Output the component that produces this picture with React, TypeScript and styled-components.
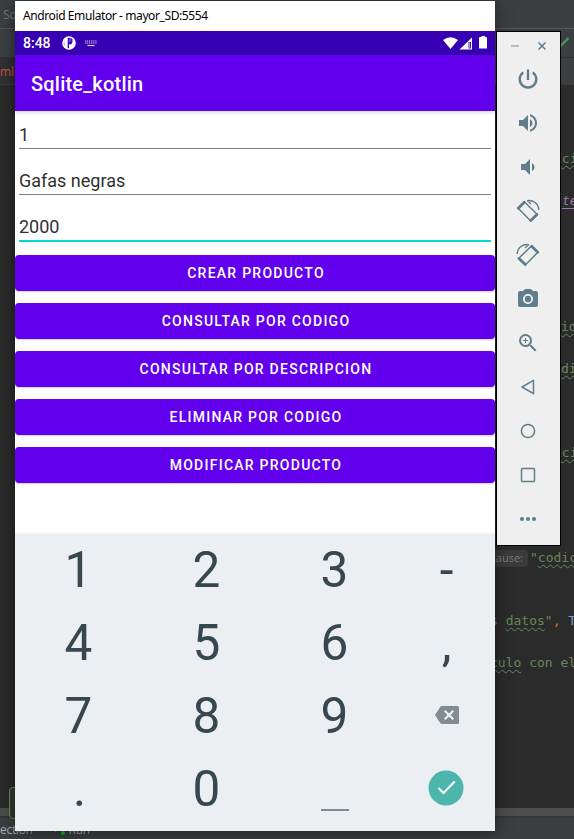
import React from "react";
import styled, { createGlobalStyle, css } from "styled-components";
import { MdVolumeUp, MdVolumeDown, MdPhotoCamera, MdZoomIn } from "react-icons/md";

const GlobalStyle = createGlobalStyle`
  * { box-sizing: border-box; }
  body { margin: 0; overflow: hidden; background: #2b2b2b; }
`;

const Desktop = styled.main`
  position: relative;
  width: 574px;
  height: 839px;
  overflow: hidden;
  font-family: Roboto, sans-serif;
`;

/* ---------- IDE behind the emulator ---------- */

const Ide = styled.div`
  display: flex;
  flex-direction: column;
  height: 100%;
  background: #2b2b2b;
`;

const IdeBar = styled.div`
  display: flex;
  align-items: center;
  flex: none;
  height: 29px;
  padding: 0 3px;
  background: #3c3f41;
  border-bottom: 1px solid #555759;
  font: 12px "Open Sans", sans-serif;
  color: #77797b;
`;

const IdeTools = styled.div`
  display: flex;
  justify-content: flex-end;
  flex: none;
  height: 28px;
  padding: 7px 3px 0 0;
  background: #3c3f41;
`;

const IdeTabs = styled.div`
  flex: none;
  height: 28px;
  background: #3c3f41;
  border-top: 1px solid #323232;
`;

const IdeTab = styled.div`
  width: 60px;
  height: 27px;
  background: #2f3031;
  border-bottom: 1px solid #3a3a3a;
  font: 12px/28px "Open Sans", sans-serif;
  color: #c75450;
`;

const Editor = styled.div`
  flex: 1;
  min-height: 0;
  overflow: hidden;
`;

const CodeLine = styled.div<{ $indent: number }>`
  height: 21px;
  padding-left: ${(p) => p.$indent}px;
  font: 13px/21px "DejaVu Sans Mono", monospace;
  color: #6a8759;
  white-space: pre;
`;

const Typo = styled.span`
  text-decoration: underline wavy #5c8f62 1px;
  text-underline-offset: 2px;
  text-decoration-skip-ink: none;
`;

const Member = styled.span`
  font-style: italic;
  color: #9876aa;
  text-decoration: underline;
  text-underline-offset: 3px;
`;

const Comma = styled.span`
  color: #cc7832;
`;

const TypeName = styled.span`
  color: #6f9bd1;
`;

const Hint = styled.span`
  display: inline-block;
  width: 44px;
  height: 17px;
  margin-right: 2px;
  padding-right: 5px;
  border-radius: 4px;
  background: #3a3a3a;
  font: 11px/16px "Open Sans", sans-serif;
  text-align: right;
  color: #7c7c7c;
`;

const SplitBar = styled.div`
  flex: none;
  height: 10px;
  background: #4d4d4d;
  border-bottom: 2px solid #333435;
`;

const ToolStrip = styled.div`
  display: flex;
  flex: none;
  gap: 21px;
  height: 21px;
  padding-top: 5px;
  background: #3c3f41;
  font: 12px/14px "Open Sans", sans-serif;
  letter-spacing: -0.3px;
  color: #a9acae;
`;

const RunItem = styled.span`
  display: flex;
  gap: 4px;
`;

const Balloon = styled.div`
  position: absolute;
  left: 9px;
  top: 787px;
  width: 40px;
  height: 32px;
  border: 1px solid #6b8a63;
  border-radius: 4px;
  background: #313d2d;
`;

/* ---------- emulator window ---------- */

const Phone = styled.section`
  position: absolute;
  left: 15px;
  top: 1px;
  display: flex;
  flex-direction: column;
  width: 480px;
  height: 830px;
  background: #fff;
  box-shadow: 0 2px 14px rgba(0, 0, 0, 0.5);
`;

const TitleBar = styled.div`
  flex: none;
  height: 30px;
  padding-left: 8px;
  font: 12px/29px "Noto Sans", sans-serif;
  letter-spacing: -0.4px;
  color: #000;
`;

const StatusBar = styled.div`
  display: flex;
  align-items: center;
  flex: none;
  height: 24px;
  padding: 0 6px 0 8px;
  background: #3700b3;
  color: #fff;
  font-size: 14px;
  font-weight: 500;
  svg { display: block; }
`;

const Clock = styled.span`
  width: 39px;
  line-height: 24px;
`;

const Spacer = styled.span`
  flex: 1;
`;

const AppBar = styled.header`
  position: relative;
  flex: none;
  height: 56px;
  padding-left: 16px;
  background: #6200ee;
  box-shadow: 0 1px 4px rgba(0, 0, 0, 0.2);
  font-size: 20px;
  font-weight: 500;
  line-height: 58px;
  letter-spacing: 0.2px;
  color: #fff;
`;

const Form = styled.div`
  flex: 1;
  min-height: 0;
`;

const Field = styled.div<{ $focused?: boolean }>`
  height: ${(p) => (p.$focused ? 47 : 46)}px;
  margin: 0 4px;
  padding-top: 20px;
  font-size: 18px;
  line-height: 24px;
  color: #303030;
  ${(p) =>
    p.$focused
      ? css`border-bottom: 2px solid #03dac5;`
      : css`border-bottom: 1px solid #808080;`}
  &:first-child {
    height: 38px;
    padding-top: 12px;
  }
`;

const Actions = styled.div`
  display: flex;
  flex-direction: column;
  gap: 12px;
  margin-top: 13px;
`;

const ActionButton = styled.button`
  height: 36px;
  padding: 0 0 0 2px;
  border: 0;
  border-radius: 4px;
  background: #6200ee;
  box-shadow: 0 1px 2px rgba(0, 0, 0, 0.2);
  font: 500 14px/36px Roboto, sans-serif;
  letter-spacing: 1.25px;
  color: #fff;
`;

const Keyboard = styled.div`
  display: grid;
  grid-template-columns: 127px 129px 127px 97px;
  grid-template-rows: repeat(4, 73px);
  flex: none;
  height: 297px;
  background: #ebeff2;
  box-shadow: 0 -1px 2px rgba(0, 0, 0, 0.06);
`;

const Key = styled.div`
  display: flex;
  align-items: center;
  justify-content: center;
  height: 70px;
  font-size: 49.5px;
  line-height: 70px;
  padding-top: 1px;
  color: #37474f;
  &:nth-child(12) { padding-top: 0; }
  &:nth-child(13) { padding-left: 2px; }
  &:nth-child(16) { padding: 0 1px 0 0; }
`;

/* ---------- emulator side toolbar ---------- */

const SidePanel = styled.aside`
  position: absolute;
  left: 496px;
  top: 31px;
  width: 65px;
  height: 515px;
  padding-right: 1px;
  border: 1px solid #000;
  background: #efefef;
  color: #607d8b;
  svg { display: block; }
`;

const PanelHeader = styled.div`
  display: flex;
  align-items: center;
  justify-content: space-between;
  height: 25px;
  padding: 2px 12px 0 14px;
`;

const Tool = styled.div`
  display: flex;
  align-items: center;
  justify-content: center;
  height: 44px;
`;

const RotateIcon = ({ flip }: { flip?: boolean }) => (
  <svg width="24" height="24" viewBox="0 0 24 24" fill="none" stroke="currentColor">
    <g transform={flip ? "translate(24 0) scale(-1 1)" : undefined}>
      <path d="M8.500 3 2.200 9.300 14.500 21.800 21.200 15.200Z" strokeWidth="1.500" strokeLinejoin="round" />
      <path d="M8.300 3.200 2.300 9.200M21 15.400 14.700 21.600" strokeWidth="2.800" strokeLinecap="round" />
      <path d="M11 1.600C17 .6 22.600 4.500 22.800 11" strokeWidth="1.400" />
      <path d="M11.500 1.800 15 5" strokeWidth="1.100" />
    </g>
  </svg>
);

const tools: React.ReactNode[] = [
  <svg key="power" width="24" height="24" viewBox="0 0 24 24" fill="none" stroke="currentColor" strokeWidth="2.400">
    <path d="M12 2.500V13M7.300 5.400A8.300 8.300 0 1 0 16.700 5.400" />
  </svg>,
  <MdVolumeUp key="up" size={24} />,
  <MdVolumeDown key="down" size={24} />,
  <RotateIcon key="left" />,
  <RotateIcon key="right" flip />,
  <MdPhotoCamera key="camera" size={24} />,
  <MdZoomIn key="zoom" size={24} />,
  <svg key="back" width="24" height="24" viewBox="0 0 24 24" fill="none" stroke="currentColor" strokeWidth="1.500">
    <path d="M17.500 5.300V18.700L6 12Z" strokeLinejoin="round" />
  </svg>,
  <svg key="home" width="24" height="24" viewBox="0 0 24 24" fill="none" stroke="currentColor" strokeWidth="1.500">
    <circle cx="12" cy="12" r="6.600" />
  </svg>,
  <svg key="recent" width="24" height="24" viewBox="0 0 24 24" fill="none" stroke="currentColor" strokeWidth="1.500">
    <rect x="5.500" y="5.500" width="13" height="13" rx="1" />
  </svg>,
  <svg key="more" width="24" height="24" viewBox="0 0 24 24" fill="currentColor">
    <circle cx="6" cy="12" r="2.100" /><circle cx="12" cy="12" r="2.100" /><circle cx="18" cy="12" r="2.100" />
  </svg>,
];

const code: Record<number, { indent: number; body: React.ReactNode }> = {
  3: { indent: 554, body: <Typo>aci</Typo> },
  5: { indent: 562, body: <Member>te</Member> },
  11: { indent: 561, body: <Typo>id</Typo> },
  13: { indent: 561, body: <Typo>di</Typo> },
  17: { indent: 554, body: <Typo>aci</Typo> },
  22: { indent: 484, body: <><Hint>cause:</Hint>"<Typo>codic</Typo></> },
  25: { indent: 490, body: <>s <Typo>datos</Typo>"<Comma>,</Comma> <TypeName>T</TypeName></> },
  27: { indent: 490, body: <><Typo>culo</Typo> con el</> },
};

const actions = [
  "CREAR PRODUCTO",
  "CONSULTAR POR CODIGO",
  "CONSULTAR POR DESCRIPCION",
  "ELIMINAR POR CODIGO",
  "MODIFICAR PRODUCTO",
];

const Backspace = () => (
  <svg width="24" height="18" viewBox="0 0 24 18">
    <path d="M7 0H22.500Q24 0 24 1.500V16.500Q24 18 22.500 18H7Q6 18 5.400 17.200L0 9 5.400.8Q6 0 7 0Z" fill="#808c90" />
    <path d="M9.700 4.700 18.300 13.300M18.300 4.700 9.700 13.300" stroke="#ebeff2" strokeWidth="2.200" />
  </svg>
);

const Done = () => (
  <svg width="36" height="36" viewBox="0 0 36 36">
    <circle cx="18" cy="18" r="17.500" fill="#4db6ac" />
    <path d="M10.500 18 15.500 23 26.700 11.500" fill="none" stroke="#fff" strokeWidth="2" />
  </svg>
);

const SpaceBar = () => (
  <svg width="28" height="50" viewBox="0 0 28 50">
    <rect y="45" width="28" height="2" fill="#808c90" />
  </svg>
);

const keys: React.ReactNode[] = [
  "1", "2", "3", "-", "4", "5", "6", ",", "7", "8", "9", <Backspace key="b" />, ".", "0", <SpaceBar key="s" />, <Done key="d" />,
];

export default function App() {
  return (
    <Desktop>
      <GlobalStyle />
      <Ide>
        <IdeBar>Sq</IdeBar>
        <IdeTools>
          <svg width="14" height="14" viewBox="0 0 14 14">
            <path d="M0 8 2.500 11 11.500 2" fill="none" stroke="#499c54" strokeWidth="2.200" />
          </svg>
        </IdeTools>
        <IdeTabs><IdeTab>ml</IdeTab></IdeTabs>
        <Editor>
          {Array.from({ length: 34 }, (_, i) => (
            <CodeLine key={i} $indent={code[i]?.indent ?? 0}>{code[i]?.body}</CodeLine>
          ))}
        </Editor>
        <SplitBar />
        <ToolStrip>
          <span>ection</span>
          <RunItem>
            <svg width="11" height="14" viewBox="0 0 11 14">
              <path d="M1 1V9L7 5Z" fill="#8f9294" /><circle cx="9" cy="10" r="2" fill="#0c0" />
            </svg>
            Run
          </RunItem>
        </ToolStrip>
      </Ide>
      <Balloon />

      <Phone>
        <TitleBar>Android Emulator - mayor_SD:5554</TitleBar>
        <StatusBar>
          <Clock>8:48</Clock>
          <svg width="14" height="14" viewBox="0 0 14 14">
            <circle cx="7" cy="7" r="6" fill="none" stroke="#fff" strokeWidth="1.600" />
            <path d="M6.600 2.700H9.300V6H6.600Z" fill="#fff" fillOpacity=".25" />
            <path d="M2 3.500 4.500 1.500H5.700V12.500L2.500 11.500ZM10.500 3H12L13.300 6.500Q13 12.500 7 13.300V8.500Q10.500 8.500 10.500 5Z" fill="#fff" />
          </svg>
          <svg width="22" height="8" viewBox="0 0 22 8">
            <g stroke="#d5c8f0" strokeWidth="1.200">
              <path d="M9 2H21" strokeDasharray="1.200 .7" /><path d="M9 4H21" strokeDasharray="1.200 .7" /><path d="M11.500 6.500H18.500" />
            </g>
          </svg>
          <Spacer />
          <svg width="46" height="14" viewBox="0 0 46 14" fill="#fff">
            <path d="M0 4Q7.500-1.400 15 4L7.500 13Z" />
            <path d="M29 1.500V13.500H16.500Z" /><path d="M25.500 6H28V12.500H25.500Z" fill="#3700b3" /><path d="M26.400 6.500H27.100V12.500H26.400Z" />
            <path d="M38.500 0H42V1H43Q44 1 44 2V12Q44 12.500 43.500 12.500H37Q36 12.500 36 12V2Q36 1 37 1H38.500Z" />
          </svg>
        </StatusBar>
        <AppBar>Sqlite_kotlin</AppBar>
        <Form>
          <Field>1</Field>
          <Field>Gafas negras</Field>
          <Field $focused>2000</Field>
          <Actions>
            {actions.map((label) => <ActionButton key={label}>{label}</ActionButton>)}
          </Actions>
        </Form>
        <Keyboard>
          {keys.map((k, i) => <Key key={i}>{k}</Key>)}
        </Keyboard>
      </Phone>

      <SidePanel>
        <PanelHeader>
          <svg width="8" height="10" viewBox="0 0 8 10"><path d="M0 5H8" stroke="#a0b0b8" strokeWidth="1.600" /></svg>
          <svg width="10" height="10" viewBox="0 0 10 10"><path d="M1.500 1.500 8.500 8.500M8.500 1.500 1.500 8.500" stroke="currentColor" strokeWidth="1.500" /></svg>
        </PanelHeader>
        {tools.map((icon, i) => <Tool key={i}>{icon}</Tool>)}
      </SidePanel>
    </Desktop>
  );
}
